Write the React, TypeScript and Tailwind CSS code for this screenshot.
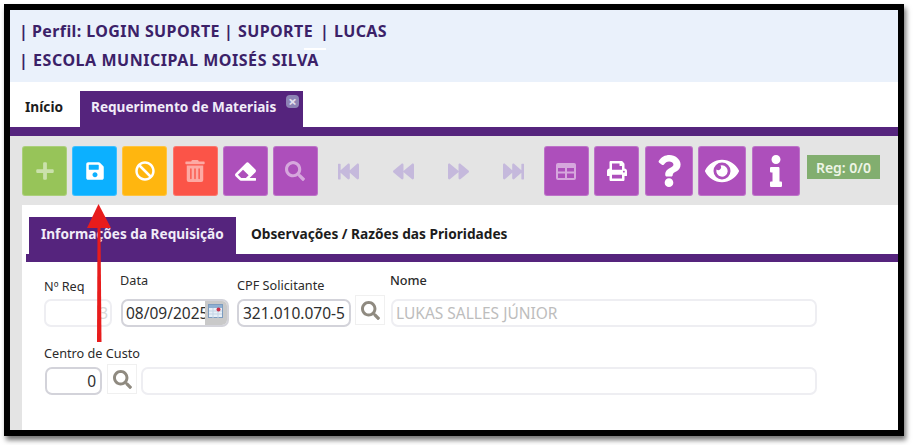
import { ReactNode } from 'react'
import {
  FaBackward,
  FaBan,
  FaEraser,
  FaEye,
  FaFastBackward,
  FaFastForward,
  FaForward,
  FaInfo,
  FaPlus,
  FaPrint,
  FaQuestion,
  FaSave,
  FaSearch,
  FaTrashAlt,
} from 'react-icons/fa'

function ToolButton({ color, width = 'w-[45px]', children }: { color: string; width?: string; children: ReactNode }) {
  return (
    <button className={`${color} ${width} h-[50px] rounded-[3px] border border-white/20 flex items-center justify-center text-white shrink-0`}>
      {children}
    </button>
  )
}

function NavIcon({ children }: { children: ReactNode }) {
  return <span className="w-[55px] flex justify-center text-[#c5b9dc] text-[21px]">{children}</span>
}

function SearchButton() {
  return (
    <button className="w-[30px] h-[30px] border border-[#f0f0f0] bg-white flex items-center justify-center text-[#8f8a80] text-[19px] shrink-0">
      <FaSearch />
    </button>
  )
}

function Label({ children, className = '' }: { children: ReactNode; className?: string }) {
  return <div className={`text-[12.7px] leading-[16px] text-[#2b2b2b] ${className}`}>{children}</div>
}

export default function App() {
  return (
    <div className="w-[915px] h-[445px] bg-white overflow-hidden pt-1 pl-1" style={{ fontFamily: '"Noto Sans", sans-serif' }}>
      <div className="relative w-[900px] h-[432px] border-[6px] border-black bg-white shadow-[2px_4px_5px_rgba(0,0,0,0.55)]">
        {/* header */}
        <div className="relative h-[72px] bg-[#eaf1fb] pl-[9px] pt-[11px] text-[16px] tracking-[0.4px] leading-[20px] font-bold text-[#3b2168]">
          <div className="flex">
            <span className="w-[13px]">|</span>
            <span className="w-[192px]">Perfil: LOGIN SUPORTE</span>
            <span className="w-[14px]">|</span>
            <span className="w-[82px]">SUPORTE</span>
            <span className="w-[14px]">|</span>
            <span>LUCAS</span>
          </div>
          <div className="flex mt-[9px] tracking-[0.55px]">
            <span className="w-[14px]">|</span>
            <span>ESCOLA MUNICIPAL MOISÉS SILVA</span>
          </div>
          <span className="absolute left-[294px] top-[38px] w-[22px] h-[2px] bg-white" />
        </div>

        {/* main tabs */}
        <div className="h-[45px] flex items-end">
          <div className="w-[70px] h-[36px] flex items-center pl-[15px] pb-[3px] text-[13.7px] font-bold text-[#1c1c1c]">Início</div>
          <div className="relative w-[223px] h-[36px] bg-[#55247d] flex items-center pl-[11px] pb-[3px] text-[13.6px] font-bold text-[#f1ecf8]">
            Requerimento de Materiais
            <span className="absolute right-[4px] top-[4px] w-[13px] h-[13px] rounded-[4px] bg-[#8d84b5] flex items-center justify-center text-[#e3e0ef] text-[15px] leading-none font-bold">
              ×
            </span>
          </div>
        </div>
        <div className="h-[9px] bg-[#55247d]" />

        {/* toolbar */}
        <div className="h-[69px] bg-[#e4e4e4] pl-3 pt-[10px] flex">
          <div className="flex gap-[5.2px]">
            <ToolButton color="bg-[#97c459]"><FaPlus className="text-[20px] opacity-50" /></ToolButton>
            <ToolButton color="bg-[#0cb0ff]"><FaSave className="text-[20px]" /></ToolButton>
            <ToolButton color="bg-[#ffb60f]"><FaBan className="text-[20px]" /></ToolButton>
            <ToolButton color="bg-[#fb5448]"><FaTrashAlt className="text-[22px] opacity-50" /></ToolButton>
            <ToolButton color="bg-[#ad4fbb]"><FaEraser className="text-[21px]" /></ToolButton>
            <ToolButton color="bg-[#ad4fbb]"><FaSearch className="text-[20px] opacity-50" /></ToolButton>
          </div>
          <div className="flex items-center w-[226px] h-[50px] pl-[3px]">
            <NavIcon><FaFastBackward /></NavIcon>
            <NavIcon><FaBackward /></NavIcon>
            <NavIcon><FaForward /></NavIcon>
            <NavIcon><FaFastForward /></NavIcon>
          </div>
          <div className="flex gap-[5.5px]">
            <ToolButton color="bg-[#ad4fbb]">
              <svg width="20" height="17" viewBox="0 0 20 17" className="opacity-50" fill="white">
                <path d="M2 0h16a2 2 0 0 1 2 2v13a2 2 0 0 1-2 2H2a2 2 0 0 1-2-2V2a2 2 0 0 1 2-2zm0 5v3.500h7V5H2zm9 0v3.500h7V5h-7zM2 10.500V15h7v-4.500H2zm9 0V15h7v-4.500h-7z" fillRule="evenodd" />
              </svg>
            </ToolButton>
            <ToolButton color="bg-[#ad4fbb]"><FaPrint className="text-[20px]" /></ToolButton>
            <ToolButton color="bg-[#ad4fbb]" width="w-[48px]"><FaQuestion className="text-[32px]" /></ToolButton>
            <ToolButton color="bg-[#ad4fbb]" width="w-[48px]"><FaEye className="text-[34px]" /></ToolButton>
            <ToolButton color="bg-[#ad4fbb]" width="w-[48px]"><FaInfo className="text-[32px]" /></ToolButton>
          </div>
          <div className="ml-[7px] mt-[9px] w-[73px] h-[24px] bg-[#82ae6f] flex items-center justify-center text-[14px] font-semibold text-[#eef5e6]">
            Reg: 0/0
          </div>
        </div>

        {/* form panel */}
        <div className="flex h-[225px]">
          <div className="w-3 bg-[#e4e4e4]" />
          <div className="flex-1 bg-white pt-3">
            <div className="h-[37px] flex pl-[7px]">
              <div className="w-[207px] bg-[#55247d] flex items-center pl-[12px] pb-[3px] text-[13.6px] font-bold text-[#f1ecf8]">
                Informações da Requisição
              </div>
              <div className="flex items-center pl-[15px] pb-[3px] text-[13.7px] font-bold text-[#1c1c1c]">
                Observações / Razões das Prioridades
              </div>
            </div>
            <div className="h-2 ml-1 bg-[#55247d]" />

            <div className="pl-[22px] pt-[11px]">
              <div className="flex h-[26px]">
                <Label className="w-[76px] pt-[5px]">Nº Req</Label>
                <Label className="w-[117px] -mt-px">Data</Label>
                <Label className="w-[153px] pt-[4px]">CPF Solicitante</Label>
                <Label className="font-medium -mt-px">Nome</Label>
              </div>
              <div className="flex items-start">
                <div className="w-[68px] h-[28px] rounded-[7px] border-2 border-[#eeeef2] pr-[2px] text-[#d8d8d8] text-[15.500px] text-right leading-[24px] overflow-hidden">
                  3
                </div>
                <div className="ml-[9px] w-[108px] h-[28px] rounded-[7px] border-2 border-[#d3d3da] flex overflow-hidden text-[15.500px] text-[#2f2f2f] leading-[24px]">
                  <div className="flex-1 pl-[3px] overflow-hidden whitespace-nowrap">08/09/2025</div>
                  <div className="w-[22px] bg-[#c9c9c9] pt-[3px] pl-[3px]">
                    <svg width="15" height="14" viewBox="0 0 15 14">
                      <rect x="0.5" y="0.5" width="14" height="13" fill="#e8f0f8" stroke="#7d9cc0" />
                      <rect x="1" y="1" width="13" height="3" fill="#8fb0d2" />
                      <path d="M1 7h13M1 10h13M5 4v10M10 4v10" stroke="#c3d3e4" />
                      <circle cx="10.500" cy="5.500" r="2" fill="#c9304a" />
                    </svg>
                  </div>
                </div>
                <div className="ml-[8px] w-[114px] h-[28px] rounded-[7px] border-2 border-[#d3d3da] px-[4px] text-[15.500px] text-[#2f2f2f] leading-[24px] whitespace-nowrap overflow-hidden">
                  321.010.070-5
                </div>
                <div className="ml-1 -mt-1">
                  <SearchButton />
                </div>
                <div className="ml-[6px] w-[426px] h-[28px] rounded-[7px] border-2 border-[#eeeef2] pl-[3px] text-[15.500px] text-[#bdbdbd] leading-[24px]">
                  LUKAS SALLES JÚNIOR
                </div>
              </div>

              <Label className="mt-[18px]">Centro de Custo</Label>
              <div className="flex items-start mt-[6px] pl-px">
                <div className="w-[57px] h-[28px] rounded-[7px] border-2 border-[#d3d3da] pr-[4px] text-right text-[15.500px] text-[#2f2f2f] leading-[24px]">
                  0
                </div>
                <div className="ml-[5px] -mt-[3px]">
                  <SearchButton />
                </div>
                <div className="ml-1 w-[676px] h-[28px] rounded-[7px] border-2 border-[#eeeef2]" />
              </div>
            </div>
          </div>
        </div>

        {/* red annotation arrow */}
        <svg className="absolute left-[-10px] top-[-10px] pointer-events-none" width="120" height="350" viewBox="0 0 120 350">
          <path d="M97 342h4.500L100.500 228h-3z" fill="#e81c1c" />
          <path d="M98.500 204L111 228H87z" fill="#e81c1c" />
        </svg>
      </div>
    </div>
  )
}
